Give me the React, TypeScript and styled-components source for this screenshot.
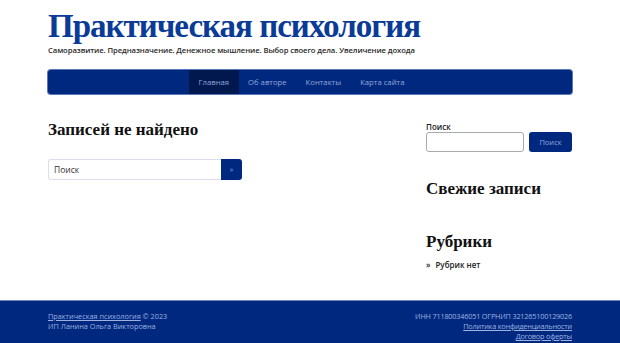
import React from "react";
import styled, { createGlobalStyle } from "styled-components";

const Global = createGlobalStyle`
  html, body { margin: 0; padding: 0; background: #fff; }
  body { font-family: "Open Sans", "Noto Sans", sans-serif; color: #222; }
  #root { min-height: 343px; display: flex; flex-direction: column; }
`;

const Page = styled.div`
  display: flex;
  flex-direction: column;
  min-height: 343px;
`;

const Container = styled.div`
  width: 524px;
  margin: 0 auto;
`;

const Header = styled.header`
  padding-top: 9px;
`;

const SiteTitle = styled.a`
  display: block;
  font-family: "Liberation Serif", serif;
  font-weight: 700;
  font-size: 33px;
  line-height: 35px;
  color: #0a3b96;
  text-decoration: none;
  letter-spacing: -1px;
`;

const Tagline = styled.div`
  font-size: 7.7px;
  font-weight: 600;
  line-height: 12px;
  color: #2a2a2a;
  letter-spacing: -0.1px;
`;

const Nav = styled.nav`
  margin-top: 14px;
  height: 24px;
  background: #00287f;
  border-radius: 3px;
  display: flex;
  justify-content: center;
  padding-right: 17px;
  box-shadow: 0 0 0 1px #5a78b8;
`;

const NavItem = styled.a<{ $active?: boolean }>`
  display: flex;
  align-items: center;
  padding: 0 9.5px;
  font-size: 7.7px;
  color: #93a9da;
  background: ${(p) => (p.$active ? "#00184d" : "transparent")};
  text-decoration: none;
`;

const Body = styled(Container)`
  display: flex;
  justify-content: space-between;
  padding-top: 26px;
  flex: 1;
`;

const Main = styled.main`
  width: 194px;
`;

const Heading = styled.h2`
  margin: 0;
  font-family: "Liberation Serif", serif;
  font-weight: 700;
  font-size: 17px;
  line-height: 20px;
  color: #111;
`;

const SearchRow = styled.form`
  display: flex;
  margin-top: 19px;
`;

const MainInput = styled.div`
  flex: 1;
  height: 21px;
  border: 1px solid #dde;
  border-right: none;
  border-radius: 3px 0 0 3px;
  box-sizing: border-box;
  font-size: 8.5px;
  color: #333;
  display: flex;
  align-items: center;
  padding-left: 5px;
`;

const SquareButton = styled.button`
  width: 21px;
  height: 21px;
  border: none;
  border-radius: 0 3px 3px 0;
  background: #00287f;
  color: #93a9da;
  font-size: 7px;
  padding: 0;
  font-family: inherit;
`;

const Sidebar = styled.aside`
  width: 146px;
`;

const Label = styled.div`
  font-size: 8px;
  font-weight: 600;
  line-height: 10px;
  color: #222;
  padding-top: 2px;
`;

const SideSearch = styled.div`
  display: flex;
  gap: 5px;
`;

const SideInput = styled.div`
  width: 98px;
  height: 20px;
  border: 1px solid #aaa;
  border-radius: 3px;
  box-sizing: border-box;
`;

const SideButton = styled.button`
  flex: 1;
  height: 20px;
  border: none;
  border-radius: 3px;
  background: #00287f;
  color: #93a9da;
  font-size: 7.5px;
  font-family: inherit;
  padding: 0;
`;

const Widget = styled.section<{ $top: number }>`
  margin-top: ${(p) => p.$top}px;
`;

const List = styled.ul`
  margin: 7px 0 0;
  padding: 0;
  list-style: none;
  font-size: 8px;
  font-weight: 600;
  color: #222;
`;

const ListItem = styled.li`
  &::before {
    content: "»";
    margin-right: 5px;
  }
`;

const Footer = styled.footer`
  background: #00287f;
  border-top: 1px solid #6b86c0;
  height: 42px;
  margin-top: auto;
`;

const FooterInner = styled(Container)`
  display: flex;
  justify-content: space-between;
  padding-top: 10px;
  font-size: 7.3px;
  line-height: 10px;
  color: #9fb3e0;
`;

const FooterCol = styled.div<{ $right?: boolean }>`
  display: flex;
  flex-direction: column;
  align-items: ${(p) => (p.$right ? "flex-end" : "flex-start")};
  letter-spacing: ${(p) => (p.$right ? "-0.2px" : "0")};
`;

const FooterLink = styled.a`
  color: #9fb3e0;
  text-decoration: underline;
`;

export default function App() {
  return (
    <Page>
      <Global />
      <Container>
        <Header>
          <SiteTitle>Практическая психология</SiteTitle>
          <Tagline>
            Саморазвитие. Предназначение. Денежное мышление. Выбор своего дела. Увеличение дохода
          </Tagline>
        </Header>
        <Nav>
          <NavItem $active>Главная</NavItem>
          <NavItem>Об авторе</NavItem>
          <NavItem>Контакты</NavItem>
          <NavItem>Карта сайта</NavItem>
        </Nav>
      </Container>
      <Body>
        <Main>
          <Heading>Записей не найдено</Heading>
          <SearchRow>
            <MainInput>Поиск</MainInput>
            <SquareButton>»</SquareButton>
          </SearchRow>
        </Main>
        <Sidebar>
          <Label>Поиск</Label>
          <SideSearch>
            <SideInput />
            <SideButton>Поиск</SideButton>
          </SideSearch>
          <Widget $top={27}>
            <Heading>Свежие записи</Heading>
          </Widget>
          <Widget $top={33}>
            <Heading>Рубрики</Heading>
            <List>
              <ListItem>Рубрик нет</ListItem>
            </List>
          </Widget>
        </Sidebar>
      </Body>
      <Footer>
        <FooterInner>
          <FooterCol>
            <div>
              <FooterLink>Практическая психология</FooterLink> © 2023
            </div>
            <div>ИП Ланина Ольга Викторовна</div>
          </FooterCol>
          <FooterCol $right>
            <div>ИНН 711800346051 ОГРНИП 321265100129026</div>
            <FooterLink>Политика конфиденциальности</FooterLink>
            <FooterLink>Договор оферты</FooterLink>
          </FooterCol>
        </FooterInner>
      </Footer>
    </Page>
  );
}
